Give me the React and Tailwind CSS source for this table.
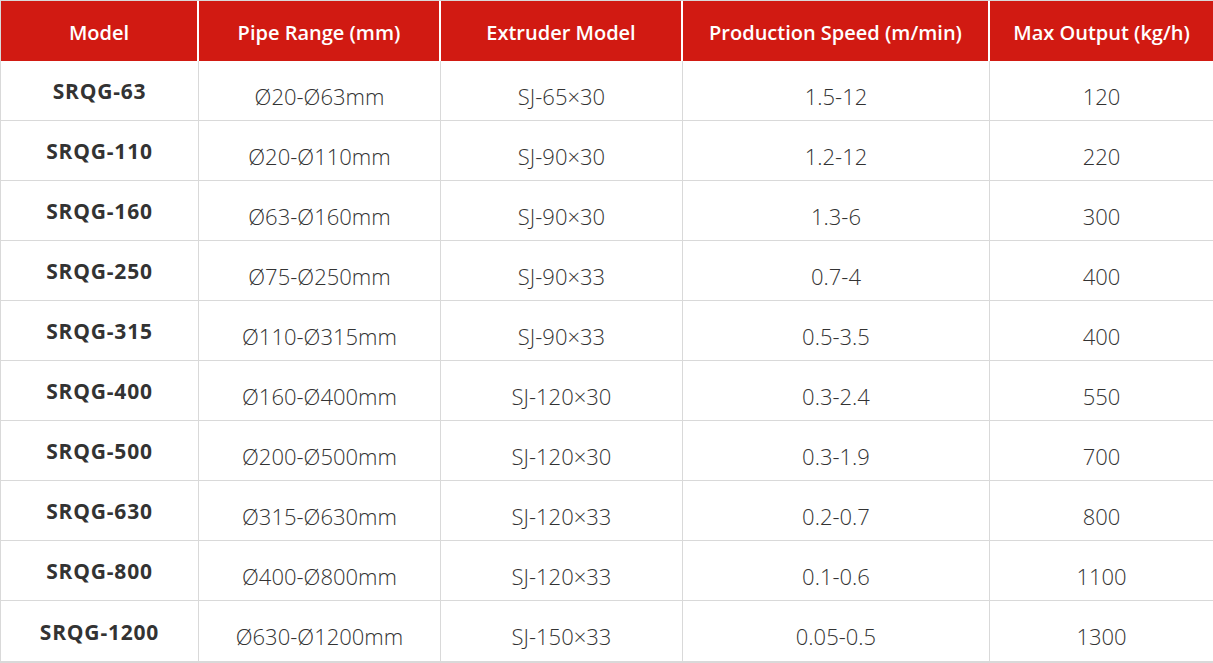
import React from "react";

const rows = [
  ["SRQG-63", "Ø20-Ø63mm", "SJ-65×30", "1.5-12", "120"],
  ["SRQG-110", "Ø20-Ø110mm", "SJ-90×30", "1.2-12", "220"],
  ["SRQG-160", "Ø63-Ø160mm", "SJ-90×30", "1.3-6", "300"],
  ["SRQG-250", "Ø75-Ø250mm", "SJ-90×33", "0.7-4", "400"],
  ["SRQG-315", "Ø110-Ø315mm", "SJ-90×33", "0.5-3.5", "400"],
  ["SRQG-400", "Ø160-Ø400mm", "SJ-120×30", "0.3-2.4", "550"],
  ["SRQG-500", "Ø200-Ø500mm", "SJ-120×30", "0.3-1.9", "700"],
  ["SRQG-630", "Ø315-Ø630mm", "SJ-120×33", "0.2-0.7", "800"],
  ["SRQG-800", "Ø400-Ø800mm", "SJ-120×33", "0.1-0.6", "1100"],
  ["SRQG-1200", "Ø630-Ø1200mm", "SJ-150×33", "0.05-0.5", "1300"],
];

const headers = ["Model", "Pipe Range (mm)", "Extruder Model", "Production Speed (m/min)", "Max Output (kg/h)"];

export default function App() {
  return (
    <div className="w-[1213px] h-[663px] bg-white" style={{ fontFamily: '"Open Sans", "Noto Sans", sans-serif' }}>
      <div className="border-t border-l border-b-2 border-[#d9d9d9]">
        <div className="grid grid-cols-[198px_242px_242px_307px_223px] h-[60px] bg-[#d11a12] text-white">
          {headers.map((h, i) => (
            <div key={i} className={`flex items-center justify-center pt-[4px] text-[20px] font-semibold ${i < 4 ? "border-r-2 border-white" : ""}`}>
              {h}
            </div>
          ))}
        </div>
        {rows.map((r, ri) => (
          <div key={ri} className={`grid grid-cols-[198px_242px_242px_307px_223px] h-[60px] ${ri < rows.length - 1 ? "border-b border-[#d9d9d9]" : ""}`}>
            {r.map((c, ci) => (
              <div
                key={ci}
                className={`flex items-center justify-center ${ci < 4 ? "border-r border-[#d9d9d9]" : ""} ${ci === 0 ? "text-[21px] font-bold text-[#333] tracking-[0.8px] pt-[3px]" : "text-[22px] font-light text-[#333] pt-[11px]"}`}
              >
                {c}
              </div>
            ))}
          </div>
        ))}
      </div>
    </div>
  );
}
